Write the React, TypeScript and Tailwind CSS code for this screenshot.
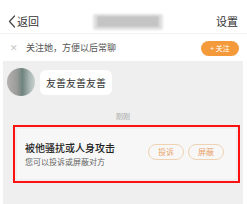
const font = { fontFamily: '"Noto Sans CJK SC", "Noto Sans", sans-serif' };

function Header() {
  return (
    <div className="h-[34px] pt-[10px] flex items-center justify-between pl-[8px] pr-[9px] border-b border-[#f3f3f3]">
      <div className="flex items-center gap-[1px] text-[11px] leading-none text-[#333]">
        <svg width="8" height="13" viewBox="0 0 8 13" fill="none">
          <path d="M6.5 1 L1.5 6.5 L6.5 12" stroke="#444" strokeWidth="1.2" strokeLinecap="round" strokeLinejoin="round" />
        </svg>
        <span>返回</span>
      </div>
      <div className="w-[70px] h-[16px] rounded-[2px] bg-[#e2e2e2] flex items-center justify-center blur-[1px]">
        <div className="w-[62px] h-[11px] bg-[#c4c4c4]" />
      </div>
      <span className="text-[11px] leading-none text-[#333]">设置</span>
    </div>
  );
}

function FollowBar() {
  return (
    <div className="h-[27px] flex items-center justify-between pl-[10px] pr-[8px]">
      <div className="flex items-center gap-[8px]">
        <span className="text-[9px] leading-none text-[#c4c4c4]">✕</span>
        <span className="text-[9px] leading-none text-[#555]">关注她，方便以后常聊</span>
      </div>
      <div className="mt-[1px] w-[38px] h-[15px] rounded-full bg-[#f59a3a] flex items-center justify-center text-[7px] leading-none text-white">
        + 关注
      </div>
    </div>
  );
}

function ReportCard() {
  return (
    <div className="ml-[10px] mt-[5px] w-[227px] h-[58px] border-2 border-[#ff1010] p-[2px]">
      <div className="h-full bg-[#f7f7f7] flex items-center justify-between pl-[8px] pr-[12px]">
        <div className="flex flex-col gap-[5px] pt-[1px]">
          <span className="text-[10px] leading-none font-medium text-[#222]">被他骚扰或人身攻击</span>
          <span className="text-[8px] leading-none text-[#666]">您可以投诉或屏蔽对方</span>
        </div>
        <div className="flex gap-[4px] mt-[-4px]">
          {['投诉', '屏蔽'].map((t) => (
            <div key={t} className="w-[36px] h-[16px] rounded-full border border-[#f0d2b2] flex items-center justify-center text-[8px] leading-none text-[#e9a36a]">
              {t}
            </div>
          ))}
        </div>
      </div>
    </div>
  );
}

export default function App() {
  return (
    <div className="w-[247px] h-[204px] bg-white overflow-hidden flex flex-col" style={font}>
      <Header />
      <FollowBar />
      <div className="mx-[3px] mr-[4px] flex-1 bg-[#efefef]">
        <div className="pt-[7px] pl-[4px] flex gap-[5px]">
          <div className="w-[28px] h-[28px] rounded-full bg-[linear-gradient(90deg,#b4b0ae_0%,#9a9c99_35%,#6f837e_55%,#a9b6b3_80%,#c9cfcd_100%)] blur-[0.5px]" />
          <div className="mt-[2px] h-[25px] px-[6px] rounded-[6px] bg-white flex items-center text-[10px] leading-none text-[#333]">
            友善友善友善
          </div>
        </div>
        <div className="mt-[17px] text-center text-[7px] leading-none text-[#aaa]">刚刚</div>
        <ReportCard />
      </div>
    </div>
  );
}
